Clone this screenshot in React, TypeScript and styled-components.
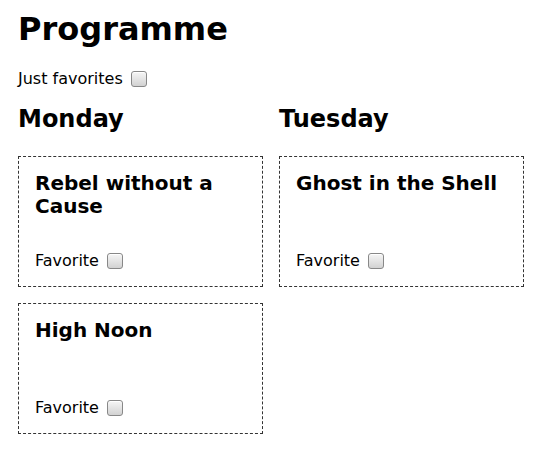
import React, { useState } from "react";
import styled, { createGlobalStyle } from "styled-components";

const GlobalStyle = createGlobalStyle`
  body {
    margin: 0;
    background: #fff;
    color: #000;
    font-family: "DejaVu Sans", sans-serif;
  }
`;

const Page = styled.div`
  padding: 10px 18px;
`;

const Title = styled.h1`
  font-size: 32px;
  font-weight: bold;
  margin: 0 0 21px;
`;

const Label = styled.label`
  display: flex;
  align-items: center;
  gap: 8px;
  font-size: 16px;
`;

const Check = styled.input.attrs({ type: "checkbox" })`
  appearance: none;
  width: 16px;
  height: 16px;
  margin: 0;
  border: 1px solid #888;
  border-radius: 3px;
  background: linear-gradient(#f6f6f6, #d2d2d2);
  box-shadow: inset 0 1px 0 #fff;
  &:checked {
    background: linear-gradient(#dcdcdc, #b8b8b8);
  }
`;

const Days = styled.div`
  display: grid;
  grid-template-columns: 245px 245px;
  column-gap: 16px;
  margin-top: 17px;
`;

const Day = styled.section`
  display: flex;
  flex-direction: column;
  gap: 16px;
`;

const DayName = styled.h2`
  font-size: 24px;
  font-weight: bold;
  margin: 0 0 7px;
`;

const Card = styled.div`
  height: 131px;
  box-sizing: border-box;
  border: 1px dashed #333;
  padding: 15px 16px 16px;
  display: flex;
  flex-direction: column;
  justify-content: space-between;
`;

const MovieTitle = styled.h3`
  font-size: 20px;
  line-height: 23px;
  font-weight: bold;
  margin: 0;
`;

const programme = [
  { day: "Monday", movies: ["Rebel without a Cause", "High Noon"] },
  { day: "Tuesday", movies: ["Ghost in the Shell"] },
];

const App = () => {
  const [justFav, setJustFav] = useState(false);
  const [favs, setFavs] = useState<Record<string, boolean>>({});

  return (
    <Page>
      <GlobalStyle />
      <Title>Programme</Title>
      <Label>
        Just favorites
        <Check checked={justFav} onChange={(e) => setJustFav(e.target.checked)} />
      </Label>
      <Days>
        {programme.map((d) => (
          <Day key={d.day}>
            <DayName>{d.day}</DayName>
            {d.movies
              .filter((m) => !justFav || favs[m])
              .map((m) => (
                <Card key={m}>
                  <MovieTitle>{m}</MovieTitle>
                  <Label>
                    Favorite
                    <Check
                      checked={!!favs[m]}
                      onChange={(e) => setFavs({ ...favs, [m]: e.target.checked })}
                    />
                  </Label>
                </Card>
              ))}
          </Day>
        ))}
      </Days>
    </Page>
  );
};

export default App;
